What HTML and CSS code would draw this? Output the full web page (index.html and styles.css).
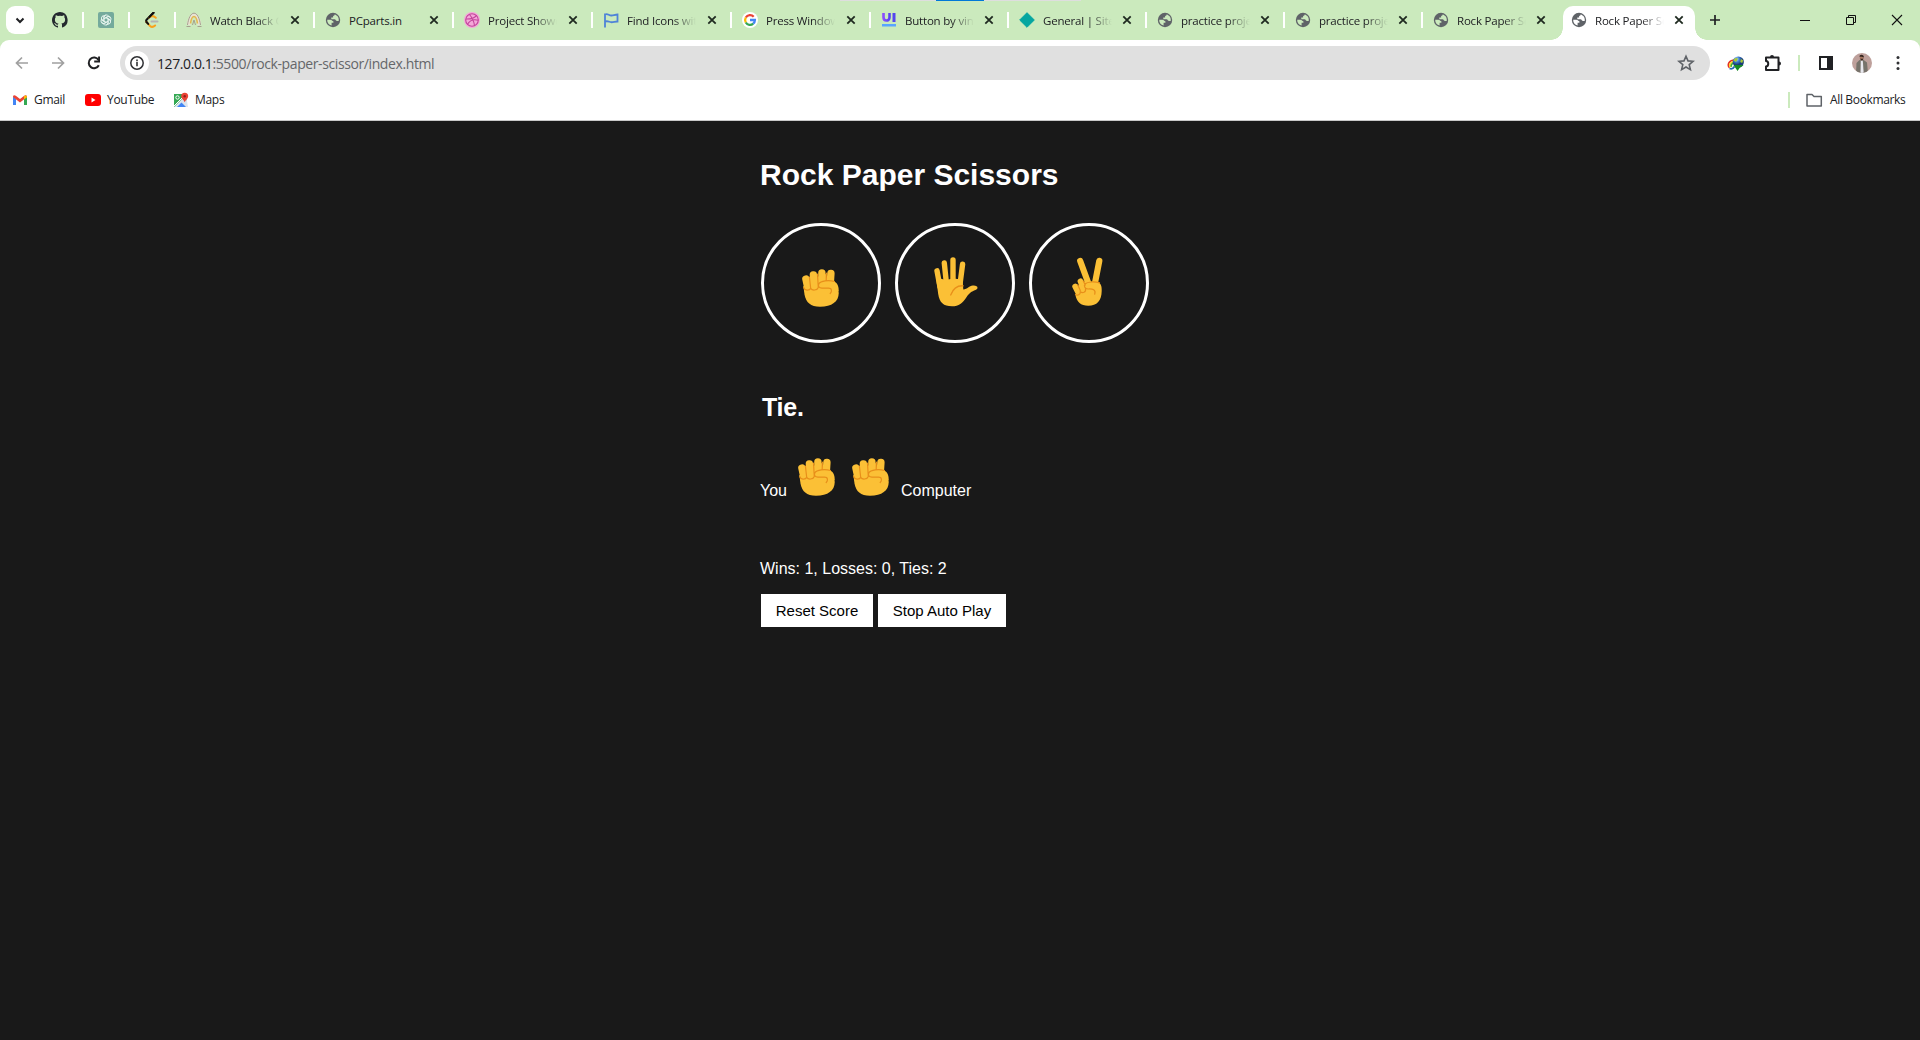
FILE: index.html
```html
<!DOCTYPE html>
<html lang="en">
<head>
<meta charset="utf-8">
<title>Rock Paper Scissors</title>
<link rel="stylesheet" href="styles.css">
</head>
<body>
<svg class="defs" aria-hidden="true">
  <symbol id="globe" viewBox="0 0 16 16"><circle cx="8" cy="8" r="7.200" fill="#5f6368"/><path d="M2.200 7.700h3.300c1.400.2 1.600 1.500 2.900 1.600v1.400H6.600v2.800c-2.800-.6-4.600-2.900-4.400-5.800zM9.600 2.500c-.1 1-.5 1.400-1.500 1.500v1.600H6.300v1.600h3.200c1.400 0 1.200 1.900 2.600 1.900h1.600C14.300 5.900 12.500 3.200 9.600 2.500z" fill="currentColor"/></symbol>
  <symbol id="close" viewBox="0 0 16 16"><path d="M4.300 4.300l7.400 7.400m0-7.400l-7.400 7.400" stroke="#1f2a20" stroke-width="1.800" fill="none"/></symbol>
  <symbol id="fist" viewBox="0 0 37 38"><g stroke="#fbc036" stroke-width="7.400" stroke-linecap="round" fill="none"><path d="M3.900 10l2.200 10M11.400 5.900l1.600 14M19.900 3.900V16M28.900 4.400l-.7 11"/></g><path d="M6 8h9l9-3 2 9 6-1-1 7H3z" fill="#fbc036"/><path d="M1.300 17h29.700c3.800.8 5.700 3.500 5.700 7.500C36.500 32.500 30 37.700 18 37.700 8.500 37.700 4 33.500 2.500 25.500z" fill="#fbc036"/><path d="M22 12.200h9.500c3.400 1 5.200 4.200 5.200 9.800l-7 4-10-7z" fill="#fbc036"/><path d="M7.400 8l1.300 11.500M15.500 5l.8 13.500M24.400 4l-.2 7.500M1.700 18.500c.7 3 5.500 3.800 7 .9 1.500 2.400 6.500 2.200 7.600-.9M32.500 12.500C27 11 18.500 11.600 16.900 14.800c-1.300 2.600.2 4.300 3 4.300h6.600c3.600 0 3.600 3.300 1.700 5.400" fill="none" stroke="#e88f1a" stroke-width="1.200" stroke-linecap="round"/></symbol>
  <symbol id="hand" viewBox="0 0 44 50"><g stroke="#fbc036" stroke-width="5.400" stroke-linecap="round" fill="none"><path d="M3 13.800L6 30M10.300 6L12.800 30M19 3v25M28.600 7.200L25.900 28"/></g><path d="M2.300 22.500l4.500-.7L12 23l7-1.500 9.500 1 .8 10c4.200-.5 5.700-3.500 9.500-4 5.200-.4 6 3 2.700 4.500-4 1.700-6 2.500-9.200 7.500C28.500 46.300 25 49.300 18 49.300 9.500 49.300 5.500 45.500 4.200 37z" fill="#fbc036"/><path d="M16.700 38c2-5.500 6-9.600 12.500-9.200" fill="none" stroke="#e88f1a" stroke-width="1.300" stroke-linecap="round"/></symbol>
  <symbol id="victory" viewBox="0 0 31 49"><path d="M8.200 4L17 28M27.300 3.800L22.800 27" stroke="#fbc036" stroke-width="6.200" stroke-linecap="round"/><path d="M12 24.500h13c3.600 1.200 5 4.500 4.700 9.500C29.500 44 25 48.700 16.300 48.700 8.500 48.700 5 45 3.500 38.500L7 27z" fill="#fbc036"/><path d="M3.200 29.500l3 6M8.500 24.300l3.300 7.500" stroke="#fbc036" stroke-width="5.800" stroke-linecap="round"/><path d="M5.700 27.800l2.600 5.700M3.500 37.500c2 1.500 5 .3 4.800-2.700 2.200 1.700 6 .8 5.200-3.300M11.300 24l2 4M27.500 25.800c-5.500-1.600-12-.9-14.300 1-1.900 2.100-.2 5.300 3 5.200 4.500-.3 8 .8 6.500 5.200" fill="none" stroke="#e88f1a" stroke-width="1.200" stroke-linecap="round"/></symbol>
</svg>
<header class="browser">
  <div class="window-edge"></div>
  <div class="tabs">
    <div class="search-tabs"><svg width="28" height="28"><path d="M10.500 12.500l3.500 3.500 3.500-3.500" fill="none" stroke="#202124" stroke-width="2"/></svg></div>
    <div class="pinned first"><svg width="16" height="16" viewBox="0 0 16 16"><path fill="#24292f" d="M8 0C3.600 0 0 3.600 0 8c0 3.500 2.300 6.500 5.500 7.600.4.100.5-.2.500-.4v-1.500c-2.200.500-2.700-1-2.700-1-.4-.9-.9-1.200-.9-1.200-.7-.5.1-.5.1-.5.8.1 1.200.8 1.200.8.700 1.300 1.900.9 2.300.7.100-.5.300-.9.500-1.100-1.800-.2-3.600-.9-3.600-4 0-.9.300-1.600.8-2.100-.1-.2-.4-1 .1-2.100 0 0 .7-.2 2.200.8a7.500 7.500 0 014 0c1.500-1 2.200-.8 2.200-.8.4 1.100.2 1.900.1 2.100.5.600.8 1.300.8 2.100 0 3.100-1.900 3.700-3.700 3.900.3.300.6.800.6 1.500v2.200c0 .2.100.5.600.4A8 8 0 008 0z"/></svg></div>
    <div class="pinned"><svg width="16" height="16"><path d="M2 0h12a2 2 0 012 2v14H2a2 2 0 01-2-2V2a2 2 0 012-2z" fill="#74aa9c"/><g fill="none" stroke="#e8f5ef" stroke-width=".9"><path id="petal" d="M6 9.200V5.400a2.500 2.500 0 014.700-1.200M6.200 6.500l3-1.700a2.500 2.500 0 013 .5"/><use href="#petal" transform="rotate(60 8 8)"/><use href="#petal" transform="rotate(120 8 8)"/><use href="#petal" transform="rotate(180 8 8)"/><use href="#petal" transform="rotate(240 8 8)"/><use href="#petal" transform="rotate(300 8 8)"/></g></svg></div>
    <div class="pinned"><svg width="16" height="16"><g fill="none" stroke-width="2" stroke-linecap="round"><path d="M9.500.8L2.800 7.500c-1 1-1 1.600-.3 2.600" stroke="#111"/><path d="M5.200 5.500c2-1.800 4.500-1.600 6.600.3" stroke="#f9a21b"/><path d="M9.500.8L5.200 5.300" stroke="#111"/><path d="M2.500 10l3.300 3.700c1.500 1.500 3.500 1.500 5.300-.2" stroke="#f9a21b"/><path d="M2.500 10l1.700 1.900" stroke="#111"/><path d="M7.500 9.500h6" stroke="#b3b3b3"/></g></svg></div>
    <div class="tab"><svg width="16" height="16"><g fill="none"><path d="M2.500 13C3.500 8 5.500 3 8 3s4.500 5 5.500 10" stroke="#e9e3d4" stroke-width="4"/><path d="M.5 14.500h4M11.500 14.500h4M1.500 13C2.500 6 4.800 1.200 8 1.200S13.500 6 14.500 13" stroke="#a5a08e"/><path d="M4.500 11.500C5 8 6.500 4.500 8 4.500s3 3.500 3.500 7" stroke="#e2b94e" stroke-width="1.600"/><path d="M6.500 13L8 8l1.500 5" stroke="#a5a08e"/></g></svg><span class="title fade">Watch Black C</span><svg class="x"><use href="#close"/></svg></div>
    <div class="tab"><svg width="16" height="16"><use href="#globe"/></svg><span class="title">PCparts.in</span><svg class="x"><use href="#close"/></svg></div>
    <div class="tab"><svg width="16" height="16"><circle cx="8" cy="8" r="8" fill="#f4a7d9"/><g fill="none" stroke="#c2449a" stroke-width="1.100"><circle cx="8" cy="8" r="6.300"/><path d="M5.500 2.500c3 3.500 4.500 7 5 11.200M1.800 7c4.500.2 8.500-.8 10.800-3.700M3.500 12.300C6 8 10 7 14.300 8.300"/></g></svg><span class="title fade">Project Showc</span><svg class="x"><use href="#close"/></svg></div>
    <div class="tab"><svg width="16" height="16"><path d="M2 15.500V1.500M2 2.500c2.500-1.500 4 1.200 6.500 1 2-.2 4-1 6-1v7c-2.500 0-4.500 1-6.500.7C6 9.800 4 8.500 2 9.700" fill="none" stroke="#4f83d8" stroke-width="1.800"/></svg><span class="title fade">Find Icons with</span><svg class="x"><use href="#close"/></svg></div>
    <div class="tab"><svg width="16" height="16"><circle cx="8" cy="8" r="8" fill="#fff"/><g fill="none" stroke-width="2.300"><path d="M3.800 5.500A4.900 4.900 0 0111.700 4.700" stroke="#ea4335"/><path d="M3.800 5.500a4.900 4.900 0 000 5" stroke="#fbbc05"/><path d="M3.800 10.500A4.900 4.900 0 0011.200 11.600" stroke="#34a853"/><path d="M8 8h4.900c0 1.500-.5 2.700-1.700 3.600" stroke="#4285f4"/></g></svg><span class="title fade">Press Window</span><svg class="x"><use href="#close"/></svg></div>
    <div class="tab shorter"><svg width="16" height="16"><defs><linearGradient id="violet"><stop stop-color="#8a4dff"/><stop offset="1" stop-color="#5a45f0"/></linearGradient></defs><path d="M2.500 1v4.300c0 4.300 6 4.300 6 0V1" fill="none" stroke="url(#violet)" stroke-width="2.600"/><path d="M11.500 1h3v9h-3z" fill="#5545ee"/><path d="M1 12h14v2.500H1z" fill="#58a5ff"/></svg><span class="title fade">Button by vinod</span><svg class="x"><use href="#close"/></svg></div>
    <div class="tab shorter"><svg width="16" height="16"><path d="M8 .7L15.300 8 8 15.300.7 8z" fill="#05a6a0" stroke="#05a6a0" stroke-linejoin="round"/></svg><span class="title fade">General | Site s</span><svg class="x"><use href="#close"/></svg></div>
    <div class="tab shorter"><svg width="16" height="16"><use href="#globe"/></svg><span class="title fade">practice project</span><svg class="x"><use href="#close"/></svg></div>
    <div class="tab shorter"><svg width="16" height="16"><use href="#globe"/></svg><span class="title fade">practice project</span><svg class="x"><use href="#close"/></svg></div>
    <div class="tab shorter last"><svg width="16" height="16"><use href="#globe"/></svg><span class="title fade">Rock Paper Sc</span><svg class="x"><use href="#close"/></svg></div>
    <div class="tab active"><svg width="16" height="16"><use href="#globe"/></svg><span class="title fade">Rock Paper Sc</span><svg class="x"><use href="#close"/></svg></div>
    <svg class="new-tab" width="16" height="16"><path d="M8 3v10M3 8h10" stroke="#202124" stroke-width="1.700"/></svg>
    <div class="window-controls">
      <svg width="12" height="12"><path d="M1 6.500h10" stroke="#111"/></svg>
      <svg width="12" height="12"><path d="M1.500 3.500h7v7h-7zM3.500 3.500v-2h7v7h-2" fill="none" stroke="#111"/></svg>
      <svg width="12" height="12"><path d="M1 1l10 10m0-10L1 11" stroke="#111" stroke-width="1.100"/></svg>
    </div>
  </div>
  <div class="toolbar">
    <svg class="nav back" width="16" height="16"><path d="M14 8H3M8 2.500L2.500 8 8 13.500" fill="none" stroke="#a0a0a0" stroke-width="1.700"/></svg>
    <svg class="nav forward" width="16" height="16"><path d="M2 8h11M8 2.500L13.500 8 8 13.500" fill="none" stroke="#a0a0a0" stroke-width="1.700"/></svg>
    <svg class="nav" width="16" height="16"><path d="M12.800 10.200A5.300 5.300 0 1112.500 5" fill="none" stroke="#202124" stroke-width="2"/><path d="M14 1.500v6H8.200V5.600h3.900V1.500z" fill="#202124"/></svg>
    <div class="address">
      <svg class="info" width="24" height="24"><circle cx="12" cy="12" r="12" fill="#fff"/><circle cx="12" cy="12" r="6.200" fill="none" stroke="#303134" stroke-width="1.500"/><path d="M12 11v4.300M12 8.500v1.700" stroke="#303134" stroke-width="1.600"/></svg>
      <span class="url"><b>127.0.0.1</b>:5500/rock-paper-scissor/index.html</span>
      <svg class="star" width="18" height="18"><path d="M9 2.200l2 4.700 5.100.4-3.900 3.300 1.200 5L9 13l-4.400 2.600 1.200-5-3.900-3.300 5.100-.4z" fill="none" stroke="#5f6368" stroke-width="1.600"/></svg>
    </div>
    <div class="actions">
      <svg width="18" height="18"><defs><radialGradient id="orb" cx=".35" cy=".25"><stop stop-color="#b9dbff"/><stop offset=".5" stop-color="#3e7fd0"/><stop offset="1" stop-color="#183d78"/></radialGradient></defs><g fill="none" stroke-width="1.700"><path d="M2.500 13.800C-.5 10 3 6 7.500 6" stroke="#e32f22"/><path d="M3.500 13.300C1.500 10.500 4 7.500 8 7.300" stroke="#ffd928"/><path d="M4.500 12.800C3.500 11 5 9 8 8.700" stroke="#3eae3c"/><path d="M2.500 14.500c2 .8 4-.3 5-2" stroke="#2268b5"/></g><circle cx="11.300" cy="8" r="5.600" fill="url(#orb)"/><path d="M6.500 6.500c1-2.500 3.200-3 4.500-1.700L9 8zM14 5l2.200 1.500-1 2.500-2-1z" fill="#a8c936"/><path d="M6.500 11h10c-1.500 1.700-2.800 2-3.500 2.500L10.500 17z" fill="#168b25"/></svg>
      <svg class="puzzle" width="18" height="18"><path d="M2 3.500h12.500V16H2v-3.500c3-.2 3-5.200 0-5.500z" fill="none" stroke="#202124" stroke-width="2" stroke-linejoin="round"/><path d="M6 3.500V3a2 2 0 014 0v.5zM14.500 7.500h.5a2 2 0 010 4h-.5z" fill="#202124"/></svg>
      <i class="divider"></i>
      <svg class="panel" width="16" height="16"><rect x="2" y="2" width="12" height="12" fill="none" stroke="#202124" stroke-width="2"/><path d="M9 2h5v12H9z" fill="#202124"/></svg>
      <svg class="avatar" width="20" height="20"><defs><clipPath id="round"><circle cx="10" cy="10" r="10"/></clipPath></defs><g clip-path="url(#round)"><path d="M0 0h20v20H0z" fill="#bea09b"/><path d="M4 20l.5-10L7.500 7h4.200L15 9.500 16 20z" fill="#77736b"/><path d="M8.800 7.500h2l.9 12.500H8.500z" fill="#e8e8ee"/><ellipse cx="9.700" cy="4.800" rx="2" ry="2.600" fill="#a87963"/><path d="M7.500 3.800C7 1 12.500 1 11.800 4.500l-2-.8zM8 5.700h3.500L10 7.800z" fill="#34251f"/></g></svg>
      <svg class="menu" width="4" height="16"><g fill="#303134"><circle cx="2" cy="2.500" r="1.500"/><circle cx="2" cy="8" r="1.500"/><circle cx="2" cy="13.500" r="1.500"/></g></svg>
    </div>
  </div>
  <nav class="bookmarks">
    <svg class="gmail" width="14" height="14"><path d="M0 3.500V12h3V6z" fill="#4285f4"/><path d="M14 3.500V12h-3V6z" fill="#34a853"/><path d="M0 4C0 2 1.500 1.800 2.800 2.800L7 6l4.200-3.200C12.500 1.800 14 2 14 4L7 9.500z" fill="#ea4335"/><path d="M11 3v3.500l3-2.200c0-2-1.600-2.300-3-1.300z" fill="#fbbc04"/></svg>
    <span class="gmail-label">Gmail</span>
    <svg class="youtube" width="16" height="16"><rect y="2" width="16" height="12" rx="3" fill="#f00"/><path d="M6.500 5.500v5l4-2.500z" fill="#fff"/></svg>
    <span class="youtube-label">YouTube</span>
    <svg class="maps" width="16" height="16"><path d="M1 2h13v13H1z" fill="#34a853"/><path d="M1 15L13 3l2 12z" fill="#dce4ed"/><path d="M4 15l4.500-4.500L13 15z" fill="#4285f4"/><path d="M1 14L13 2" stroke="#fff"/><circle cx="4.500" cy="5.500" r="1.700" fill="none" stroke="#fff"/><path d="M8.200 4.300a3.500 3.500 0 017 0c0 2.300-2.500 3.500-3.500 6-1-2.500-3.500-3.700-3.500-6z" fill="#ea4335"/><circle cx="11.700" cy="4.200" r="1.200" fill="#90221b"/></svg>
    <span class="maps-label">Maps</span>
    <div class="all"><i class="divider"></i><svg width="18" height="16"><path d="M2 2.500h5l2 2h7.300V14H2z" fill="none" stroke="#5f6368" stroke-width="1.500" stroke-linejoin="round"/></svg><span class="all-label">All Bookmarks</span></div>
  </nav>
</header>
<main class="game">
  <h1>Rock Paper Scissors</h1>
  <div class="moves">
    <button class="move" aria-label="Rock"><svg class="rock" width="37" height="38"><use href="#fist"/></svg></button>
    <button class="move" aria-label="Paper"><svg class="paper" width="44" height="50"><use href="#hand"/></svg></button>
    <button class="move" aria-label="Scissors"><svg class="scissors" width="31" height="49"><use href="#victory"/></svg></button>
  </div>
  <h2>Tie.</h2>
  <div class="picks"><span class="you">You</span><svg width="37" height="38"><use href="#fist"/></svg><svg width="37" height="38"><use href="#fist"/></svg><span class="computer">Computer</span></div>
  <p class="score">Wins: 1, Losses: 0, Ties: 2</p>
  <div class="controls"><button class="reset">Reset Score</button><button class="auto">Stop Auto Play</button></div>
</main>
</body>
</html>
```
FILE: styles.css
```css
* { box-sizing: border-box; }
body { margin: 0; height: 1040px; overflow: hidden; background: #191919; color: #fff; font-family: "Liberation Sans", Arial, sans-serif; }
svg { display: block; flex: none; }
.defs { position: absolute; width: 0; height: 0; }
.browser { position: relative; height: 121px; background: #cbeabd; border-bottom: 1px solid #c8c8c8; color: #202124; font-family: "Open Sans", "Noto Sans", sans-serif; font-size: 12px; }
.window-edge { position: absolute; top: 0; left: 840px; width: 241px; height: 1px; background: linear-gradient(to right, #dedede 96px, #0078d7 96px, #0078d7 144px, #dedede 144px); }
.tabs { display: flex; align-items: center; height: 40px; }
.search-tabs { width: 28px; height: 28px; margin-left: 6px; border-radius: 9px; background: #fff; }
.pinned { width: 46px; height: 16px; padding-left: 14px; border-left: 2px solid #fff; }
.pinned.first { width: 48px; padding-left: 18px; border: 0; }
.tab { display: flex; align-items: center; flex: none; width: 139px; height: 16px; padding-left: 10px; border-left: 2px solid #fff; }
.tab > svg:first-child { color: #cbeabd; }
.tab.shorter { width: 138px; }
.tab.shorter .x { margin-left: 7px; }
.tab.shorter.last { width: 142px; }
.title { width: 69px; height: 22px; padding-top: 2px; margin-left: 8px; font-size: 11.5px; line-height: 20px; white-space: nowrap; overflow: hidden; letter-spacing: -.2px; }
.fade { -webkit-mask-image: linear-gradient(to right, #000 46px, transparent 69px); mask-image: linear-gradient(to right, #000 46px, transparent 69px); }
.x { width: 16px; height: 16px; margin-left: 8px; }
.tab.active { position: relative; width: 132px; height: 34px; align-self: flex-end; padding-left: 8px; padding-bottom: 6px; border: 0; border-radius: 10px 10px 0 0; background: #fff; }
.tab.active > svg:first-child { color: #fff; }
.active .x { margin-left: 7px; }
.active::before, .active::after { content: ""; position: absolute; bottom: 0; width: 12px; height: 12px; }
.active::before { left: -12px; background: radial-gradient(circle at 0 0, transparent 11.500px, #fff 12px); }
.active::after { right: -12px; background: radial-gradient(circle at 100% 0, transparent 11.500px, #fff 12px); }
.new-tab { margin-left: 12px; }
.window-controls { display: flex; gap: 34px; margin-left: auto; margin-right: 17px; }
.toolbar { display: flex; align-items: center; height: 46px; border-radius: 9px 9px 0 0; background: #fff; }
.nav { margin-left: 20px; }
.nav.back { margin-left: 14px; }
.address { display: flex; align-items: center; width: 1590px; height: 34px; margin-left: 18px; padding: 0 15px 0 5px; border-radius: 17px; background: #e0e0e0; }
.url { width: 600px; margin-left: 8px; color: #65676a; font-size: 14px; letter-spacing: -.4px; }
.url b { color: #202124; font-weight: 400; }
.star { margin-left: auto; }
.actions { display: flex; align-items: center; margin-left: 17px; }
.puzzle { margin-left: 19px; }
.divider { width: 2px; height: 16px; background: #cbeabd; }
.actions .divider { margin-left: 16px; }
.panel { margin-left: 18px; }
.avatar { margin-left: 18px; }
.menu { margin-left: 24px; }
.bookmarks { display: flex; align-items: center; height: 34px; padding: 0 15px 6px 13px; background: #fff; white-space: nowrap; letter-spacing: -.3px; }
.bookmarks span { padding-bottom: 1px; }
.gmail-label { width: 51px; margin-left: 7px; }
.youtube-label { width: 66px; margin-left: 6px; }
.maps-label { margin-left: 6px; }
.all { display: flex; align-items: center; margin-left: auto; }
.all svg { margin-left: 15px; }
.all-label { width: 75px; margin-left: 7px; letter-spacing: -.35px; }
.game { width: 400px; margin-left: 760px; padding-top: 35px; }
h1 { height: 37px; margin: 0; font-size: 30px; line-height: 37px; }
.moves { display: flex; gap: 14px; margin: 30px 0 0 1px; }
.move { display: flex; justify-content: center; width: 120px; height: 120px; padding: 0; border: 3px solid #fff; border-radius: 50%; background: transparent; }
.rock { margin-top: 43px; margin-right: 1px; }
.paper { margin-top: 31px; margin-left: 1px; }
.scissors { margin-top: 31px; margin-right: 3px; }
h2 { height: 29px; margin: 50px 0 0 2px; font-size: 25px; line-height: 29px; letter-spacing: -.2px; }
.picks { display: flex; align-items: flex-end; height: 40px; margin: 38px 0 0; }
.picks span { line-height: 18px; }
.you { width: 38px; }
.picks svg { margin-bottom: 4px; }
.picks svg + svg { margin-left: 17px; }
.computer { margin-left: 12px; }
.score { margin: 60px 0 0; line-height: 18px; }
.controls { display: flex; gap: 5px; margin: 16px 0 0 1px; }
.controls button { height: 33px; padding: 0; border: 0; background: #fff; color: #000; font: 15px "Liberation Sans", Arial, sans-serif; }
.controls .reset { width: 112px; }
.controls .auto { width: 128px; }
```
